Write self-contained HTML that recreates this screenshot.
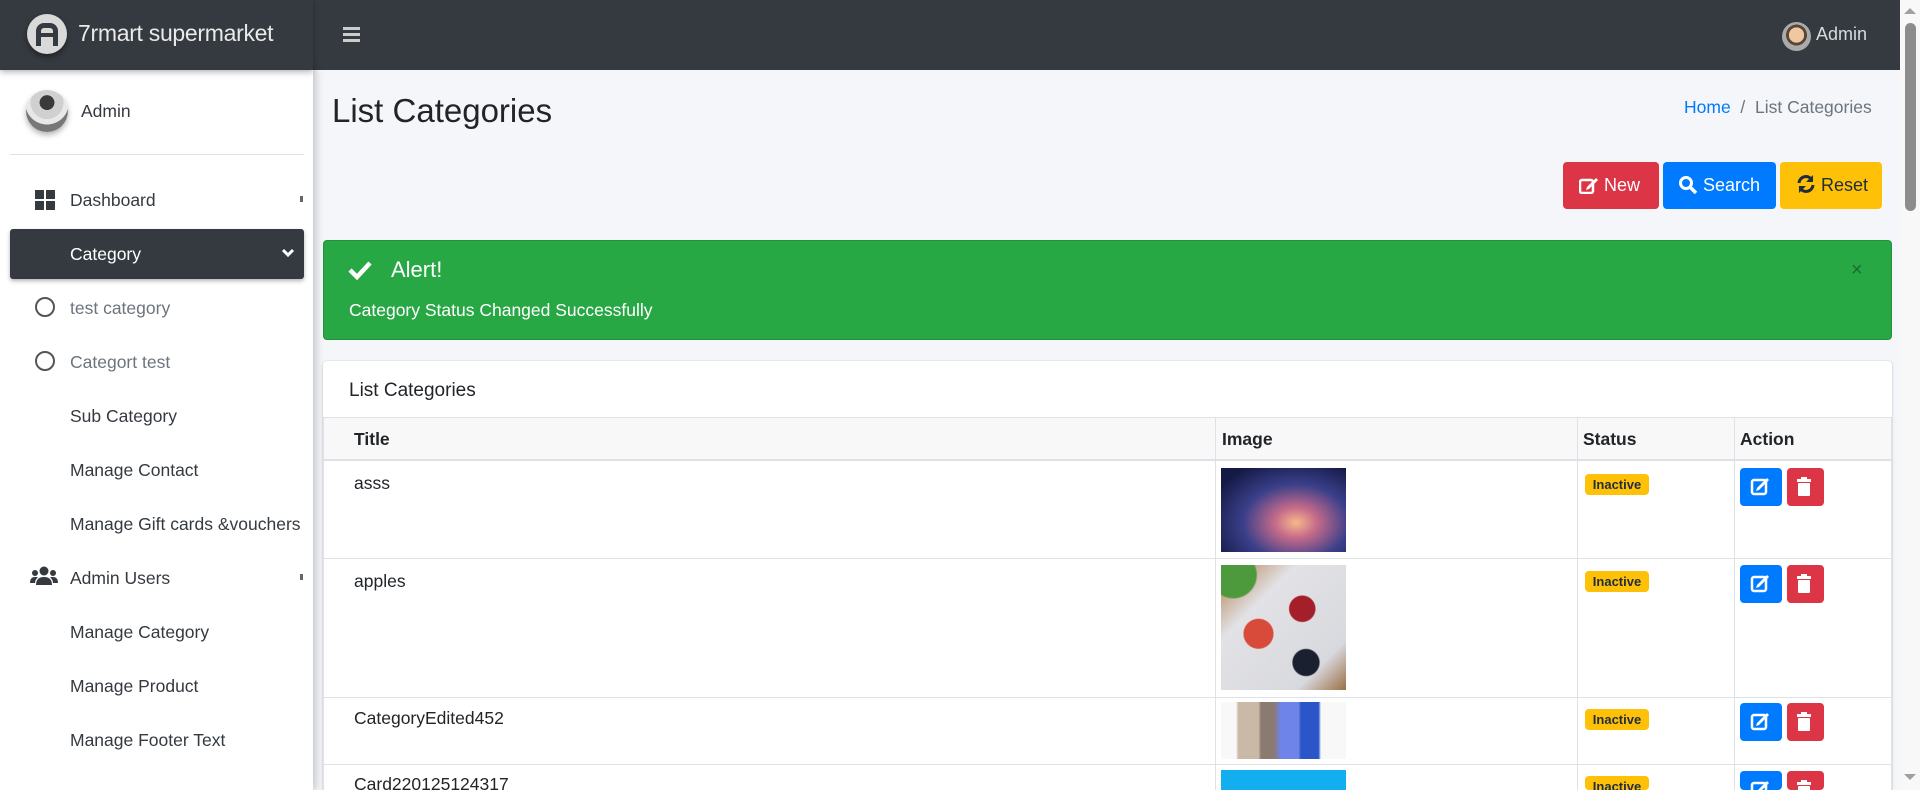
<!DOCTYPE html>
<html style="overflow:hidden;width:1920px;height:790px"><head><meta charset="utf-8"><style>
*{box-sizing:border-box;margin:0;padding:0}
body{width:1920px;height:790px;overflow:hidden;background:#f4f6f9;font-family:"Liberation Sans",sans-serif;color:#212529;position:relative}
.wrap{position:absolute;left:0;top:0;width:1920px;height:790px;overflow:hidden}
.a{position:absolute}
.top{left:0;top:0;width:1900px;height:70px;background:#343a40}
.side{left:0;top:70px;width:313px;height:720px;background:#fff;box-shadow:3px 0 8px rgba(0,0,0,.2)}
.brand{left:0;top:0;width:313px;height:70px;background:#343a40;box-shadow:0 2px 6px rgba(0,0,0,.3)}
.nav{left:70px;font-size:17.5px;color:#343a40;white-space:nowrap;line-height:22px}
.th{font-weight:bold;font-size:17.5px;top:429px}
.cell{font-size:17.5px}
.badge{width:64px;height:21px;background:#ffc107;border-radius:4px;font-size:13px;font-weight:bold;color:#1f2d3d;text-align:center;line-height:21px}
.eb{width:42px;height:38px;background:#007bff;border-radius:4px}
.db{width:37px;height:38px;background:#dc3545;border-radius:4px}
.vl{width:1px;background:#dee2e6}
.hl{height:1px;background:#dee2e6;left:323px;width:1569px}
</style></head><body><div class="wrap">
<div class="a top"></div>
<div class="a" style="left:343px;top:27px;width:17px;height:3px;background:#ccc;box-shadow:0 6px 0 #ccc,0 12px 0 #ccc"></div>
<div class="a" style="left:1782px;top:22px;width:29px;height:29px;border-radius:50%;background:radial-gradient(circle at 50% 45%,#f1c7a3 0 35%,#5a4636 36% 48%,#aaa 49%)"></div>
<div class="a" style="left:1816px;top:24px;font-size:18px;color:#d8dadc">Admin</div>

<div class="a side"></div>
<div class="a brand"></div>
<div class="a" style="left:27px;top:14px;width:40px;height:40px;border-radius:50%;background:#d9d9d9;box-shadow:0 3px 6px rgba(0,0,0,.4)"></div>
<div class="a" style="left:36px;top:23px;width:22px;height:23px;border:5px solid #343a40;border-bottom:none;border-radius:8px 8px 0 0"></div>
<div class="a" style="left:39px;top:33px;width:16px;height:4px;background:#343a40"></div>
<div class="a" style="left:78px;top:20px;font-size:23px;color:#eaeaea;letter-spacing:-0.3px">7rmart supermarket</div>

<div class="a" style="left:26px;top:90px;width:42px;height:42px;border-radius:50%;background:radial-gradient(circle at 50% 30%,#3a3a3a 0 20%,#d0d0d0 21% 45%,#e8e8e8 46% 60%,#777 61%);box-shadow:0 3px 6px rgba(0,0,0,.3)"></div>
<div class="a" style="left:81px;top:101px;font-size:17.5px;color:#343a40">Admin</div>
<div class="a" style="left:10px;top:154px;width:294px;height:1px;background:#dee2e6"></div>

<div class="a" style="left:35px;top:190px;width:9px;height:9px;background:#343a40"></div>
<div class="a" style="left:46px;top:190px;width:9px;height:9px;background:#343a40"></div>
<div class="a" style="left:35px;top:201px;width:9px;height:9px;background:#343a40"></div>
<div class="a" style="left:46px;top:201px;width:9px;height:9px;background:#343a40"></div>
<div class="a nav" style="top:189px">Dashboard</div>
<div class="a" style="left:300px;top:196px;width:3px;height:6px;background:#666"></div>
<div class="a" style="left:10px;top:229px;width:294px;height:50px;background:#343a40;border-radius:3px;box-shadow:0 2px 4px rgba(0,0,0,.3)"></div>
<div class="a nav" style="top:243px;color:#fff">Category</div>
<svg class="a" style="left:281px;top:247px" width="14" height="12"><path d="M2 3 L7 8 L12 3" stroke="#fff" stroke-width="3" fill="none"/></svg>
<div class="a" style="left:35px;top:297px;width:20px;height:20px;border:2px solid #555;border-radius:50%"></div>
<div class="a nav" style="top:297px;color:#6c757d">test category</div>
<div class="a" style="left:35px;top:351px;width:20px;height:20px;border:2px solid #555;border-radius:50%"></div>
<div class="a nav" style="top:351px;color:#6c757d">Categort test</div>
<div class="a nav" style="top:405px">Sub Category</div>
<div class="a nav" style="top:459px">Manage Contact</div>
<div class="a nav" style="top:513px;width:234px;overflow:hidden">Manage Gift cards &amp;vouchers</div>
<svg class="a" style="left:30px;top:566px" width="28" height="20"><circle cx="14" cy="5" r="4.5" fill="#343a40"/><circle cx="5" cy="7" r="3" fill="#343a40"/><circle cx="23" cy="7" r="3" fill="#343a40"/><path d="M6 19 Q6 11 14 11 Q22 11 22 19Z M0 17 Q0 11 5 11 L8 11 Q5 14 5 17Z M28 17 Q28 11 23 11 L20 11 Q23 14 23 17Z" fill="#343a40"/></svg>
<div class="a nav" style="top:567px">Admin Users</div>
<div class="a" style="left:300px;top:574px;width:3px;height:6px;background:#666"></div>
<div class="a nav" style="top:621px">Manage Category</div>
<div class="a nav" style="top:675px">Manage Product</div>
<div class="a nav" style="top:729px">Manage Footer Text</div>

<div class="a" style="left:332px;top:92px;font-size:33px;color:#212529">List Categories</div>
<div class="a" style="left:1684px;top:97px;font-size:17.5px;color:#6c757d;white-space:nowrap"><span style="color:#007bff">Home</span>&nbsp;&nbsp;/&nbsp;&nbsp;List Categories</div>

<div class="a" style="left:1563px;top:162px;width:96px;height:47px;background:#dc3545;border-radius:4px;color:#fff;font-size:18px;line-height:47px;padding-left:16px">
<svg style="vertical-align:-3px" width="20" height="18"><rect x="1" y="4" width="13" height="13" rx="2" fill="none" stroke="#fff" stroke-width="2.5"/><path d="M8 11 L17 2 L19 4 L10 13 L7 14Z" fill="#fff"/></svg> New</div>
<div class="a" style="left:1663px;top:162px;width:113px;height:47px;background:#007bff;border-radius:4px;color:#fff;font-size:18px;line-height:47px;padding-left:15px">
<svg style="vertical-align:-3px" width="20" height="19"><circle cx="8" cy="8" r="5.5" fill="none" stroke="#fff" stroke-width="3"/><path d="M12 12 L18 18" stroke="#fff" stroke-width="3.5"/></svg> Search</div>
<div class="a" style="left:1780px;top:162px;width:102px;height:47px;background:#ffc107;border-radius:4px;color:#1f2d3d;font-size:18px;line-height:47px;padding-left:16px">
<svg style="vertical-align:-3px" width="20" height="20"><path d="M3 9 A7 7 0 0 1 16 6" stroke="#1f2d3d" stroke-width="3" fill="none"/><path d="M17 1 L17 8 L10 8Z" fill="#1f2d3d"/><path d="M17 11 A7 7 0 0 1 4 14" stroke="#1f2d3d" stroke-width="3" fill="none"/><path d="M3 19 L3 12 L10 12Z" fill="#1f2d3d"/></svg> Reset</div>

<div class="a" style="left:323px;top:240px;width:1569px;height:100px;background:#28a745;border-radius:4px;border:1px solid #23923d"></div>
<svg class="a" style="left:348px;top:260px" width="24" height="20"><path d="M2 10 L9 17 L22 3" stroke="#fff" stroke-width="4.5" fill="none"/></svg>
<div class="a" style="left:391px;top:257px;font-size:22px;color:#fff">Alert!</div>
<div class="a" style="left:349px;top:300px;font-size:17.5px;color:#fff">Category Status Changed Successfully</div>
<div class="a" style="left:1851px;top:259px;font-size:20px;color:#1b6e31">×</div>

<div class="a" style="left:323px;top:361px;width:1569px;height:429px;background:#fff;border-radius:4px 4px 0 0;box-shadow:0 0 1px rgba(0,0,0,.2),0 1px 3px rgba(0,0,0,.15)"></div>
<div class="a" style="left:349px;top:380px;font-size:19px">List Categories</div>
<div class="a hl" style="top:417px"></div>
<div class="a" style="left:323px;top:418px;width:1569px;height:42px;background:#f8f8f8"></div>
<div class="a" style="left:323px;top:459px;width:1569px;height:2px;background:#dee2e6"></div>
<div class="a th" style="left:354px">Title</div>
<div class="a th" style="left:1222px">Image</div>
<div class="a th" style="left:1583px">Status</div>
<div class="a th" style="left:1740px">Action</div>
<div class="a vl" style="left:1215px;top:418px;height:372px"></div>
<div class="a vl" style="left:1577px;top:418px;height:372px"></div>
<div class="a vl" style="left:1734px;top:418px;height:372px"></div>
<div class="a vl" style="left:1891px;top:418px;height:372px"></div>
<div class="a vl" style="left:323px;top:418px;height:372px"></div>
<div class="a hl" style="top:558px"></div>
<div class="a hl" style="top:697px"></div>
<div class="a hl" style="top:764px"></div>

<div class="a cell" style="left:354px;top:473px">asss</div>
<div class="a cell" style="left:354px;top:571px">apples</div>
<div class="a cell" style="left:354px;top:708px">CategoryEdited452</div>
<div class="a cell" style="left:354px;top:774px">Card220125124317</div>

<div class="a" style="left:1221px;top:468px;width:125px;height:84px;background:radial-gradient(ellipse at 60% 65%,#f7b98a 0,#c46a8a 20%,#3a3f8a 50%,#141a45 85%)"></div>
<div class="a" style="left:1221px;top:565px;width:125px;height:125px;background:radial-gradient(circle at 30% 55%,#d84b3a 0 13%,transparent 14%),radial-gradient(circle at 65% 35%,#a51f2a 0 11%,transparent 12%),radial-gradient(circle at 68% 78%,#1b2030 0 10%,transparent 11%),radial-gradient(circle at 10% 8%,#4d9a3d 0 14%,transparent 15%),linear-gradient(135deg,#b07a4a,#e2e2e6 30%,#d8d9de 80%,#9c6e45)"></div>
<div class="a" style="left:1221px;top:702px;width:125px;height:57px;background:linear-gradient(90deg,#f8f8f8 0 12%,#c9b9a6 14% 30%,#8a7a70 32% 42%,#6f84e8 48% 62%,#2b56c9 64% 78%,#f8f8f8 80%)"></div>
<div class="a" style="left:1221px;top:770px;width:125px;height:20px;background:#12aef0"></div>

<div class="a badge" style="left:1585px;top:474px">Inactive</div>
<div class="a badge" style="left:1585px;top:571px">Inactive</div>
<div class="a badge" style="left:1585px;top:709px">Inactive</div>
<div class="a badge" style="left:1585px;top:776px;height:14px;overflow:hidden">Inactive</div>

<div class="a eb" style="left:1740px;top:468px"></div><div class="a db" style="left:1787px;top:468px"></div>
<div class="a eb" style="left:1740px;top:565px"></div><div class="a db" style="left:1787px;top:565px"></div>
<div class="a eb" style="left:1740px;top:703px"></div><div class="a db" style="left:1787px;top:703px"></div>
<div class="a eb" style="left:1740px;top:771px;height:19px"></div><div class="a db" style="left:1787px;top:771px;height:19px"></div>
<svg class="a" style="left:1740px;top:468px" width="83" height="322">
<defs><g id="i"><rect x="12" y="12" width="14" height="14" rx="2" fill="none" stroke="#fff" stroke-width="2.5"/><path d="M17 20 L27 10 L29 12 L19 22 L16 23Z" fill="#fff"/><rect x="57" y="11" width="14" height="3" fill="#fff"/><rect x="61" y="9" width="6" height="3" fill="#fff"/><rect x="58" y="15" width="12" height="13" rx="1" fill="#fff"/></g></defs>
<use href="#i"/><use href="#i" y="97"/><use href="#i" y="235"/><use href="#i" y="303"/>
</svg>

<div class="a" style="left:1900px;top:0;width:20px;height:790px;background:#f8f8f8"></div>
<div class="a" style="left:1905px;top:23px;width:11px;height:188px;background:#8c8c8c;border-radius:6px"></div>
<svg class="a" style="left:1903px;top:6px" width="14" height="10"><path d="M1 8 L7 2 L13 8Z" fill="#a0a0a0"/></svg>
<svg class="a" style="left:1903px;top:772px" width="14" height="10"><path d="M1 2 L7 8 L13 2Z" fill="#a0a0a0"/></svg>
</div></body></html>
